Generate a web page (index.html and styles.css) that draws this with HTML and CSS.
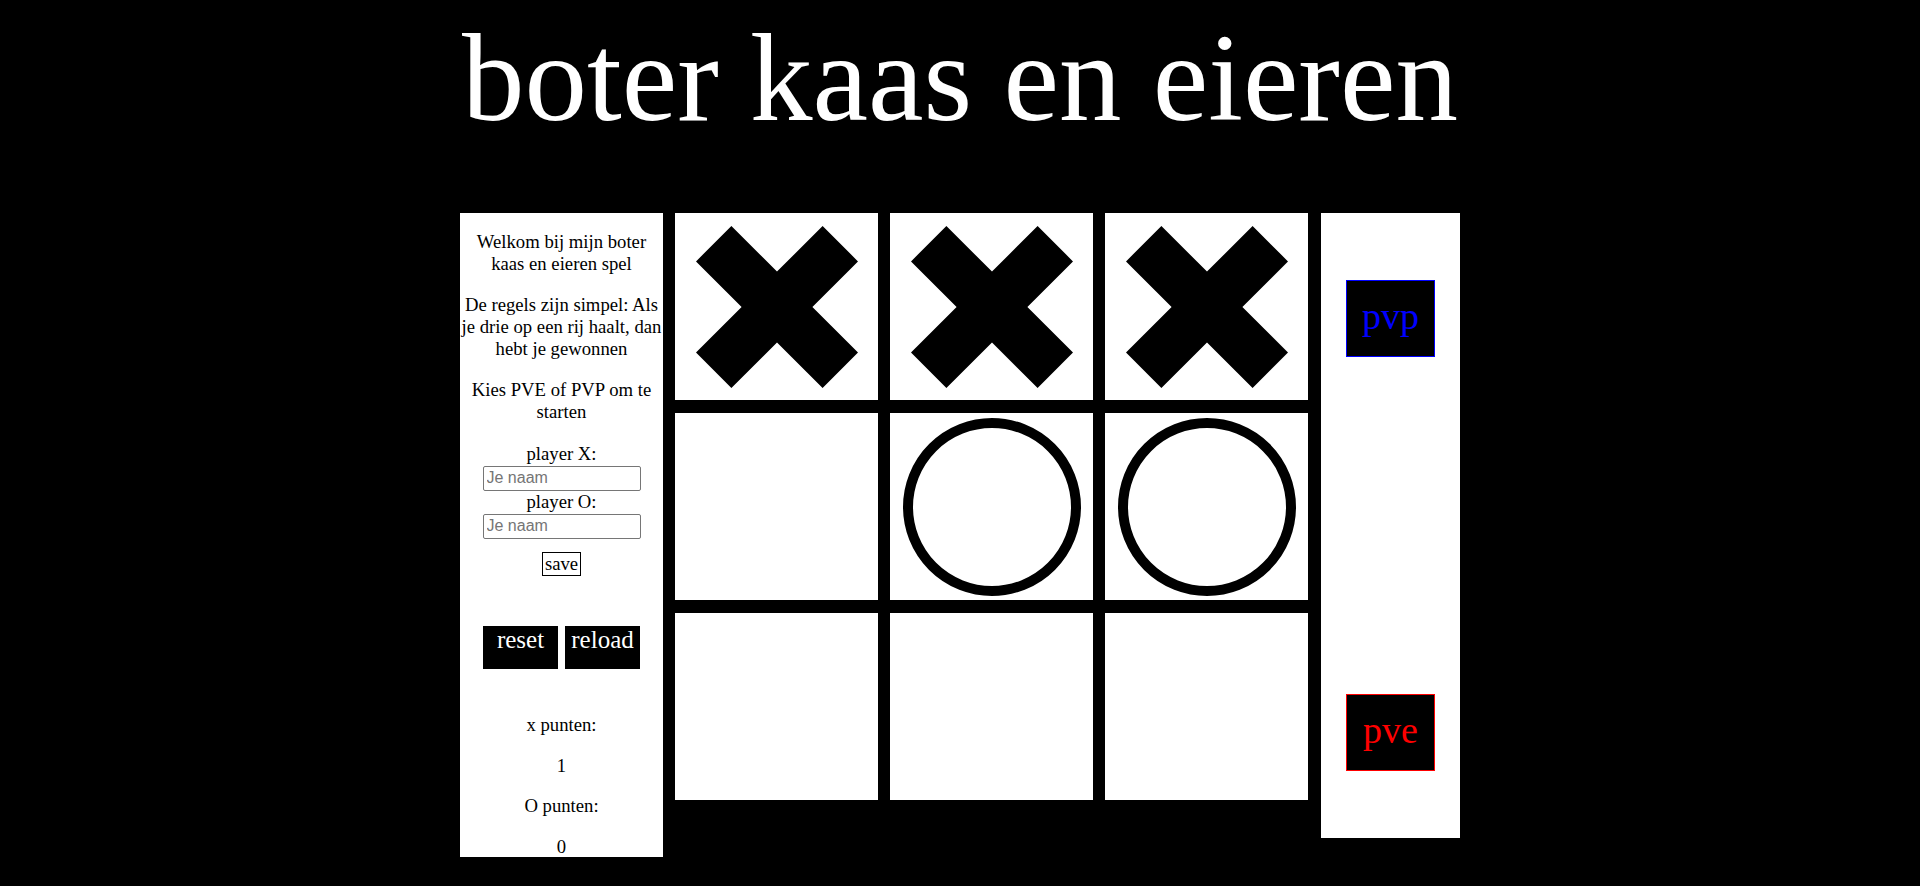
FILE: index.html
```html
<!DOCTYPE html>
<html lang="nl">
<head>
<meta charset="utf-8">
<title>boter kaas en eieren</title>
<link rel="stylesheet" href="styles.css">
</head>
<body>
<h1 class="title">boter kaas en eieren</h1>
<main class="game">
  <aside class="info">
    <p class="intro">Welkom bij mijn boter kaas en eieren spel</p>
    <p>De regels zijn simpel: Als je drie op een rij haalt, dan hebt je gewonnen</p>
    <p>Kies PVE of PVP om te starten</p>
    <form class="names">
      <label class="name-label">player X:</label>
      <input class="name-input" type="text" placeholder="Je naam">
      <label class="name-label">player O:</label>
      <input class="name-input" type="text" placeholder="Je naam">
      <button class="save" type="button">save</button>
    </form>
    <div class="controls">
      <button class="ctrl" type="button">reset</button>
      <button class="ctrl" type="button">reload</button>
    </div>
    <div class="scores">
      <p>x punten:</p>
      <p>1</p>
      <p>O punten:</p>
      <p>0</p>
    </div>
  </aside>
  <div class="board">
    <div class="cell"><svg class="mark-x" viewBox="0 0 162 162"><polygon points="35.4,0 81,45.6 126.6,0 162,35.4 116.4,81 162,126.6 126.6,162 81,116.4 35.4,162 0,126.6 45.6,81 0,35.4"/></svg></div>
    <div class="cell"><svg class="mark-x" viewBox="0 0 162 162"><polygon points="35.4,0 81,45.6 126.6,0 162,35.4 116.4,81 162,126.6 126.6,162 81,116.4 35.4,162 0,126.6 45.6,81 0,35.4"/></svg></div>
    <div class="cell"><svg class="mark-x" viewBox="0 0 162 162"><polygon points="35.4,0 81,45.6 126.6,0 162,35.4 116.4,81 162,126.6 126.6,162 81,116.4 35.4,162 0,126.6 45.6,81 0,35.4"/></svg></div>
    <div class="cell"></div>
    <div class="cell"><svg class="mark-o" viewBox="0 0 178 178"><circle cx="89" cy="89" r="84"/></svg></div>
    <div class="cell"><svg class="mark-o" viewBox="0 0 178 178"><circle cx="89" cy="89" r="84"/></svg></div>
    <div class="cell"></div>
    <div class="cell"></div>
    <div class="cell"></div>
  </div>
  <aside class="modes">
    <button class="mode pvp" type="button">pvp</button>
    <button class="mode pve" type="button">pve</button>
  </aside>
</main>
</body>
</html>
```
FILE: styles.css
```css
body {
  margin: 0;
  background: #000;
  font-family: "Liberation Serif", "Times New Roman", serif;
}

.title {
  margin: 0 0 63px;
  padding-top: 6px;
  font-size: 125px;
  line-height: 144px;
  font-weight: normal;
  color: #fff;
  text-align: center;
}

.game {
  display: flex;
  align-items: flex-start;
  width: 1000px;
  margin: 0 auto;
}

.info {
  width: 203px;
  height: 644px;
  flex: none;
  margin-right: 12px;
  background: #fff;
  color: #000;
  text-align: center;
  font-size: 18.7px;
  line-height: 21.65px;
}

.info p {
  margin: 20px 0;
}

.info .intro {
  margin-top: 18px;
}

.names {
  display: flex;
  flex-direction: column;
  align-items: center;
  margin-top: 18.5px;
}

.name-label {
  display: block;
}

.name-input {
  width: 158px;
  height: 25px;
  box-sizing: border-box;
  margin: 1.5px 0 0;
  padding: 1px 3px;
  border: 1px solid #767676;
  border-radius: 2px;
  font: 16px "Liberation Sans", Arial, sans-serif;
  color: #000;
  background: #fff;
}

.name-input::placeholder {
  color: #757575;
}

.save {
  margin-top: 13.5px;
  height: 24px;
  box-sizing: border-box;
  padding: 0 2px;
  border: 1px solid #000;
  border-radius: 0;
  background: #fff;
  color: #000;
  font-family: "Liberation Serif", "Times New Roman", serif;
  font-size: 18.7px;
  line-height: 22px;
}

.controls {
  display: flex;
  justify-content: center;
  gap: 7px;
  margin-top: 50px;
}

.ctrl {
  width: 75px;
  height: 43px;
  box-sizing: border-box;
  padding: 0 0 16px;
  border: 0;
  border-radius: 0;
  background: #000;
  color: #fff;
  font-family: "Liberation Serif", "Times New Roman", serif;
  font-size: 25px;
  line-height: 27px;
}

.scores {
  margin-top: 45px;
}

.scores p {
  margin: 18.85px 0;
}

.scores p:first-child {
  margin-top: 0;
}

.board {
  display: grid;
  grid-template-columns: repeat(3, 203px);
  grid-template-rows: repeat(3, 187px);
  column-gap: 12px;
  row-gap: 13px;
  margin-right: 13px;
  flex: none;
}

.cell {
  background: #fff;
  display: flex;
  align-items: center;
  justify-content: center;
}

.mark-x {
  width: 162px;
  height: 162px;
  fill: #000;
}

.mark-o {
  width: 178px;
  height: 178px;
  fill: none;
  stroke: #000;
  stroke-width: 10;
}

.modes {
  width: 139px;
  height: 625px;
  flex: none;
  box-sizing: border-box;
  padding: 67px 0;
  background: #fff;
  display: flex;
  flex-direction: column;
  justify-content: space-between;
  align-items: center;
}

.mode {
  width: 89px;
  height: 77px;
  box-sizing: border-box;
  padding: 0 0 6px;
  border: 1px solid;
  border-radius: 0;
  background: #000;
  font-family: "Liberation Serif", "Times New Roman", serif;
  font-size: 38px;
  line-height: 44px;
}

.pvp {
  color: #00f;
  border-color: #00f;
}

.pve {
  color: #f00;
  border-color: #f00;
}
```
